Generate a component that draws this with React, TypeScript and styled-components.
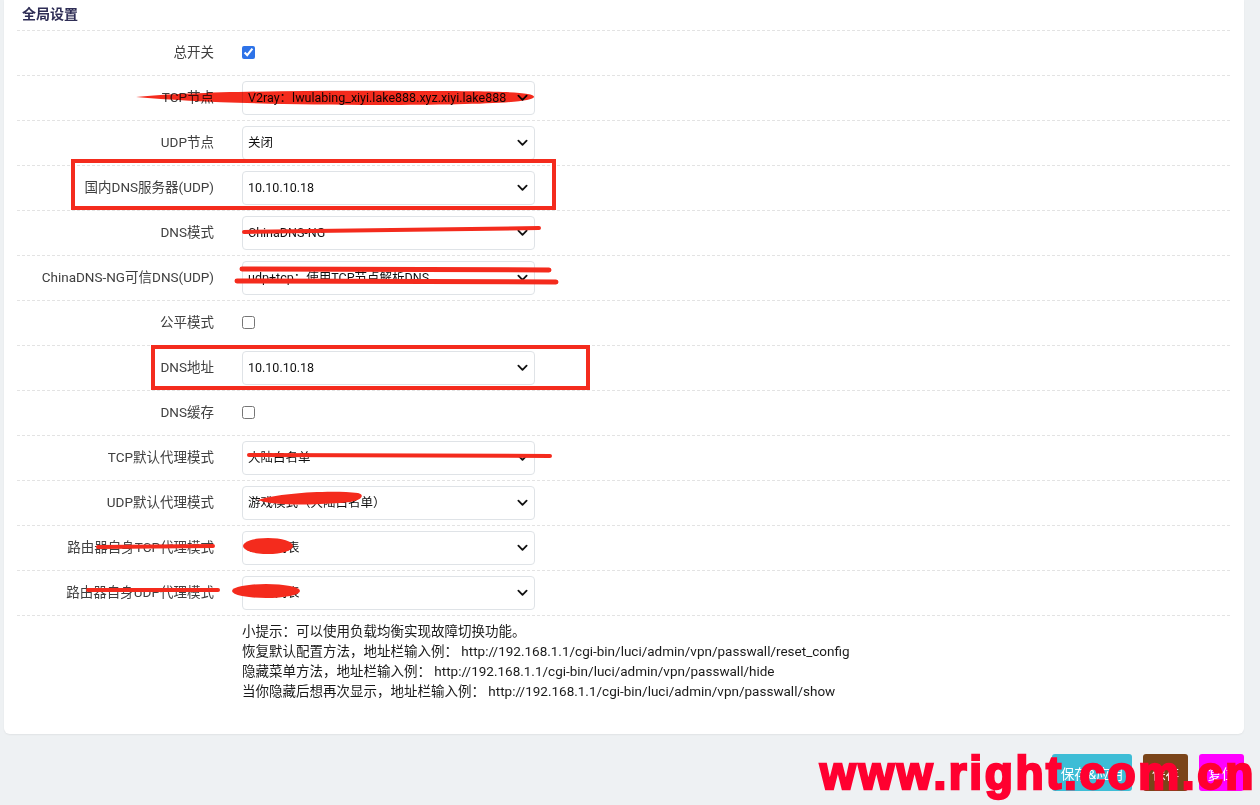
import React from "react";
import styled, { createGlobalStyle } from "styled-components";

const Global = createGlobalStyle`
  html, body { margin: 0; padding: 0; }
  body {
    background: #eef1f3;
    font-family: Roboto, "Noto Sans CJK SC", sans-serif;
    width: 1260px;
    height: 805px;
    overflow: hidden;
  }
  * { box-sizing: border-box; }
`;

const Page = styled.div`
  position: relative;
  width: 1260px;
  height: 805px;
  display: flex;
  flex-direction: column;
  isolation: isolate;
`;

const Card = styled.div`
  margin: 0 16px 0 4px;
  background: #fff;
  border-radius: 0 0 6px 6px;
  box-shadow: 0 1px 2px rgba(0, 0, 0, 0.06);
  padding: 0 14px 33px 13px;
`;

const Title = styled.h3`
  margin: 0;
  height: 30px;
  line-height: 28px;
  padding-left: 5px;
  font-size: 14px;
  font-weight: 700;
  color: #2e2d55;
`;

const Row = styled.div`
  height: 45px;
  border-top: 1px dashed #e3e3e3;
  padding-bottom: 1px;
  display: grid;
  grid-template-columns: 197px 293px;
  column-gap: 28px;
  align-items: center;
`;

const Label = styled.label`
  text-align: right;
  font-size: 13.5px;
  line-height: 16px;
  padding-bottom: 2px;
  color: #404040;
  white-space: nowrap;
`;

const Check = styled.input`
  margin: 0;
  width: 13px;
  height: 13px;
  accent-color: #2e73e8;
`;

const SelectWrap = styled.div`
  position: relative;
  width: 293px;
  height: 34px;
`;

const Select = styled.select`
  appearance: none;
  -webkit-appearance: none;
  width: 100%;
  height: 100%;
  border: 1px solid #dfe3e7;
  border-radius: 4px;
  background: #fff;
  padding: 0 28px 0 5px;
  font-family: Roboto, "Noto Sans CJK SC", sans-serif;
  font-size: 12.5px;
  color: #111;
  outline: none;
`;

const Chevron = styled.svg`
  position: absolute;
  right: 7px;
  top: 12px;
  width: 11px;
  height: 10px;
  pointer-events: none;
`;

const Hints = styled.div`
  border-top: 1px dashed #e3e3e3;
  padding: 5px 0 0 225px;
  font-size: 13.5px;
  line-height: 20px;
  color: #1a1a1a;
`;

const HintLine = styled.div`
  white-space: nowrap;
`;

const ButtonBar = styled.div`
  display: flex;
  justify-content: flex-end;
  gap: 11px;
  padding: 20px 16px 0 0;
`;

const Btn = styled.button<{ $bg: string; $w: number }>`
  width: ${(p) => p.$w}px;
  height: 37px;
  border: none;
  border-radius: 3px;
  background: ${(p) => p.$bg};
  color: #fff;
  font-family: Roboto, "Noto Sans CJK SC", sans-serif;
  font-size: 13.5px;
  padding: 0;
`;

const Overlay = styled.svg<{ $blend?: boolean }>`
  position: absolute;
  left: 0;
  top: 0;
  width: 1260px;
  height: 805px;
  pointer-events: none;
  mix-blend-mode: ${(p) => (p.$blend ? "multiply" : "normal")};
`;

const Watermark = styled.div`
  position: absolute;
  left: 820px;
  top: 747px;
  font-family: "Liberation Sans", Arial, sans-serif;
  font-weight: 900;
  font-size: 46px;
  line-height: 52px;
  letter-spacing: 2.6px;
  color: #ff0030;
  -webkit-text-stroke: 2.4px #ff0030;
  pointer-events: none;
  white-space: nowrap;
`;

type Field =
  | { kind: "check"; label: string; checked: boolean }
  | { kind: "select"; label: string; value: string };

const fields: Field[] = [
  { kind: "check", label: "总开关", checked: true },
  { kind: "select", label: "TCP节点", value: "V2ray：lwulabing_xiyi.lake888.xyz.xiyi.lake888.xyz" },
  { kind: "select", label: "UDP节点", value: "关闭" },
  { kind: "select", label: "国内DNS服务器(UDP)", value: "10.10.10.18" },
  { kind: "select", label: "DNS模式", value: "ChinaDNS-NG" },
  { kind: "select", label: "ChinaDNS-NG可信DNS(UDP)", value: "udp+tcp：使用TCP节点解析DNS" },
  { kind: "check", label: "公平模式", checked: false },
  { kind: "select", label: "DNS地址", value: "10.10.10.18" },
  { kind: "check", label: "DNS缓存", checked: false },
  { kind: "select", label: "TCP默认代理模式", value: "大陆白名单" },
  { kind: "select", label: "UDP默认代理模式", value: "游戏模式（大陆白名单）" },
  { kind: "select", label: "路由器自身TCP代理模式", value: "GFW列表" },
  { kind: "select", label: "路由器自身UDP代理模式", value: "GFW列表" },
];

const hints = [
  "小提示：可以使用负载均衡实现故障切换功能。",
  "恢复默认配置方法，地址栏输入例： http://192.168.1.1/cgi-bin/luci/admin/vpn/passwall/reset_config",
  "隐藏菜单方法，地址栏输入例： http://192.168.1.1/cgi-bin/luci/admin/vpn/passwall/hide",
  "当你隐藏后想再次显示，地址栏输入例： http://192.168.1.1/cgi-bin/luci/admin/vpn/passwall/show",
];

const RED = "#f42b1d";

export default function App() {
  return (
    <>
      <Global />
      <Page>
        <Card>
          <Title>全局设置</Title>
          {fields.map((f) => (
            <Row key={f.label}>
              <Label>{f.label}</Label>
              {f.kind === "check" ? (
                <Check type="checkbox" defaultChecked={f.checked} />
              ) : (
                <SelectWrap>
                  <Select defaultValue={f.value}>
                    <option value={f.value}>{f.value}</option>
                  </Select>
                  <Chevron viewBox="0 0 12 10">
                    <path d="M1.5 2.5 L6 7 L10.5 2.5" fill="none" stroke="#111" strokeWidth="2" strokeLinecap="round" strokeLinejoin="round" />
                  </Chevron>
                </SelectWrap>
              )}
            </Row>
          ))}
          <Hints>
            {hints.map((h) => (
              <HintLine key={h}>{h}</HintLine>
            ))}
          </Hints>
        </Card>
        <ButtonBar>
          <Btn $bg="#3dbdd6" $w={80}>保存&amp;应用</Btn>
          <Btn $bg="#7a4519" $w={45}>保存</Btn>
          <Btn $bg="#ff00ff" $w={45}>复位</Btn>
        </ButtonBar>
        <Overlay $blend viewBox="0 0 1260 805">
          <path fill={RED} d="M136 97 C 200 91, 330 90, 420 91 C 500 91, 535 92, 534 97 C 533 103, 470 105, 380 105 C 280 105, 190 102, 136 97 Z" />
        </Overlay>
        <Overlay viewBox="0 0 1260 805">
          <g fill="none" stroke={RED} strokeLinecap="round">
            <rect x="73" y="161" width="481" height="47" strokeWidth="4" strokeLinecap="butt" />
            <rect x="153" y="347" width="435" height="41" strokeWidth="4" strokeLinecap="butt" />
            <path d="M244 232 L539 228" strokeWidth="4" />
            <path d="M242 269 L549 270" strokeWidth="5" />
            <path d="M237 281 L556 282" strokeWidth="5" />
            <path d="M249 455 L550 456" strokeWidth="4" />
            <path d="M98 547 L213 546" strokeWidth="4" />
            <path d="M88 590 L218 590" strokeWidth="4" />
          </g>
          <g fill={RED}>
            <path d="M258 500 C 280 493, 330 490, 358 493 C 366 495, 362 502, 340 503 C 310 505, 275 506, 258 500 Z" />
            <ellipse cx="268" cy="546" rx="25" ry="8" />
            <ellipse cx="266" cy="591" rx="34" ry="7" />
          </g>
        </Overlay>
        <Watermark>www.right.com.cn</Watermark>
      </Page>
    </>
  );
}
